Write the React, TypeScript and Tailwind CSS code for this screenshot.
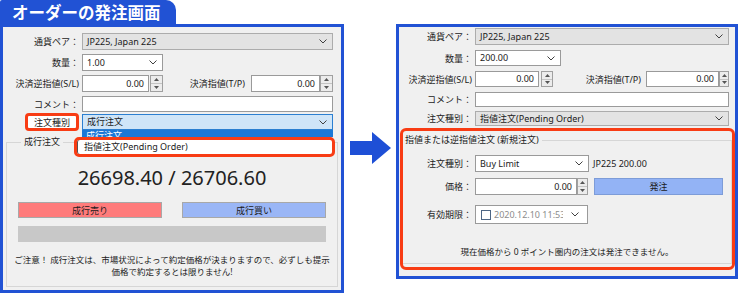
import React from "react";

function Chevron() {
  return (
    <svg width="8" height="5" viewBox="0 0 8 5" className="shrink-0">
      <path d="M0.5 0.5L4 4L7.5 0.5" fill="none" stroke="#404040" strokeWidth="1" />
    </svg>
  );
}

function Combo({ text, className, variant }: { text: string; className: string; variant: "gray" | "white" | "open" }) {
  const look =
    variant === "gray"
      ? "bg-[#e3e3e3] border-[#acacac]"
      : variant === "open"
      ? "bg-[#cfe5f8] border-[#2b7fd1]"
      : "bg-white border-[#9a9a9a]";
  return (
    <div className={`flex items-center justify-between border pl-[4px] pr-[5px] ${look} ${className}`}>
      <span className="whitespace-nowrap leading-[12px]">{text}</span>
      <Chevron />
    </div>
  );
}

function Spinner({ className }: { className: string }) {
  return (
    <div className={`flex flex-col border border-[#a0a0a0] bg-[#ececec] ${className}`}>
      <div className="flex-1 flex items-center justify-center border-b border-[#c4c4c4]">
        <svg width="5" height="3" viewBox="0 0 5 3">
          <path d="M0 3L2.5 0L5 3Z" fill="#555" />
        </svg>
      </div>
      <div className="flex-1 flex items-center justify-center">
        <svg width="5" height="3" viewBox="0 0 5 3">
          <path d="M0 0L2.5 3L5 0Z" fill="#555" />
        </svg>
      </div>
    </div>
  );
}

function NumBox({ className }: { className: string }) {
  return (
    <div className={`flex items-center justify-end pr-[4px] bg-white border border-[#9a9a9a] ${className}`}>
      <span className="leading-[12px]">0.00</span>
    </div>
  );
}

export default function App() {
  return (
    <div className="w-[740px] h-[295px] bg-white flex overflow-hidden text-[9px] leading-none text-[#1b1b1b] font-['Noto_Sans','Noto_Sans_CJK_JP',sans-serif]">
      {/* Left column */}
      <div className="flex flex-col w-[344px] h-[293px] shrink-0">
        <div className="h-[24px] w-[176px] bg-[#2152d4] rounded-tr-[10px] rounded-tl-[2px] flex items-center pl-[12px] text-white font-bold text-[16.5px] leading-none font-['Noto_Sans_CJK_JP',sans-serif]">
          オーダーの発注画面
        </div>
        <div className="flex-1 border-[3px] border-[#2152d4] bg-[#f0f0f0] flex flex-col pt-[6px]">
          <div className="flex flex-col pr-[8px]">
            <div className="flex items-center h-[17px]">
              <div className="w-[79px] pr-[3px] text-right whitespace-nowrap">通貨ペア：</div>
              <Combo className="flex-1 h-full" variant="gray" text="JP225, Japan 225" />
            </div>
            <div className="flex items-center h-[17px] mt-[4px]">
              <div className="w-[79px] pr-[3px] text-right whitespace-nowrap">数量：</div>
              <Combo className="w-[81px] h-full" variant="white" text="1.00" />
            </div>
            <div className="flex items-center h-[17px] mt-[4px]">
              <div className="w-[79px] pr-[3px] text-right whitespace-nowrap">決済逆指値(S/L)</div>
              <NumBox className="w-[67px] h-full" />
              <Spinner className="w-[13px] h-full ml-[1px]" />
              <div className="flex-1 pr-[6px] text-right whitespace-nowrap">決済指値(T/P)</div>
              <NumBox className="w-[69px] h-full" />
              <Spinner className="w-[13px] h-full" />
            </div>
            <div className="flex items-center h-[16px] mt-[4px]">
              <div className="w-[79px] pr-[3px] text-right whitespace-nowrap">コメント：</div>
              <div className="flex-1 h-full bg-white border border-[#9a9a9a]" />
            </div>
            <div className="flex items-center h-[18px] mt-[1px]">
              <div className="w-[22px]" />
              <div className="w-[54px] h-full border-[3px] border-[#f83c14] rounded-[4px] bg-white flex items-center justify-center whitespace-nowrap">
                注文種別
              </div>
              <div className="relative flex-1 h-[16px] ml-[3px]">
                <Combo className="w-full h-full" variant="open" text="成行注文" />
                <div className="absolute top-full left-0 right-0 h-[7px] bg-[#1c78d6] overflow-hidden pl-[4px] pt-[1px] text-white z-10">
                  成行注文
                </div>
                <div className="absolute top-[23px] left-[-8px] right-[-2px] h-[20px] border-[3px] border-[#f83c14] rounded-[5px] bg-white flex items-center pl-[7px] z-20 shadow-[inset_1px_0_0_#555]">
                  <span className="whitespace-nowrap leading-[12px]">指値注文(Pending Order)</span>
                </div>
              </div>
            </div>
          </div>
          <fieldset className="mt-[5px] mx-[3px] mb-[3px] flex-1 border border-[#d6d6d6] flex flex-col items-center px-[11px] min-w-0">
            <legend className="ml-[3px] px-[3px] whitespace-nowrap leading-[12px]">成行注文</legend>
            <div className="mt-[18px] text-[20px] leading-[24px] font-['Noto_Sans',sans-serif] text-[#222]">
              26698.40 / 26706.60
            </div>
            <div className="w-full flex justify-between mt-[12px]">
              <div className="w-[144px] h-[16px] bg-[#ff7b7b] border border-[#a8a8a8] flex items-center justify-center">
                成行売り
              </div>
              <div className="w-[144px] h-[16px] bg-[#9ab6f6] border border-[#a8a8a8] flex items-center justify-center">
                成行買い
              </div>
            </div>
            <div className="w-full h-[16px] mt-[8px] bg-[#c8c8c8]" />
            <div className="mt-[12px] text-center text-[8.5px] leading-[12px] whitespace-nowrap">
              ご注意！ 成行注文は、市場状況によって約定価格が決まりますので、必ずしも提示
              <br />
              価格で約定するとは限りません!
            </div>
          </fieldset>
        </div>
      </div>

      {/* Arrow */}
      <div className="w-[52px] shrink-0 flex items-center pl-[6px]">
        <svg width="41" height="32" viewBox="0 0 41 32">
          <polygon points="0,9 22,9 22,0 41,16 22,32 22,23 0,23" fill="#1e4fd6" />
        </svg>
      </div>

      {/* Right column */}
      <div className="pt-[24px] w-[342px] shrink-0">
        <div className="h-[255px] border-[3px] border-[#2152d4] bg-[#f0f0f0] flex flex-col pt-[1px] pb-[6px]">
          <div className="flex flex-col pr-[6px]">
            <div className="flex items-center h-[17px]">
              <div className="w-[76px] pr-[3px] text-right whitespace-nowrap">通貨ペア：</div>
              <Combo className="flex-1 h-full" variant="gray" text="JP225, Japan 225" />
            </div>
            <div className="flex items-center h-[16px] mt-[5px]">
              <div className="w-[76px] pr-[3px] text-right whitespace-nowrap">数量：</div>
              <Combo className="w-[86px] h-full" variant="white" text="200.00" />
            </div>
            <div className="flex items-center h-[16px] mt-[5px]">
              <div className="w-[76px] pr-[3px] text-right whitespace-nowrap">決済逆指値(S/L)</div>
              <NumBox className="w-[64px] h-full" />
              <Spinner className="w-[12px] h-full ml-[2px]" />
              <div className="flex-1 pr-[5px] text-right whitespace-nowrap">決済指値(T/P)</div>
              <NumBox className="w-[73px] h-full" />
              <Spinner className="w-[10px] h-full" />
            </div>
            <div className="flex items-center h-[15px] mt-[5px]">
              <div className="w-[76px] pr-[3px] text-right whitespace-nowrap">コメント：</div>
              <div className="flex-1 h-full bg-white border border-[#9a9a9a]" />
            </div>
            <div className="flex items-center h-[15px] mt-[4px]">
              <div className="w-[76px] pr-[3px] text-right whitespace-nowrap">注文種別：</div>
              <Combo className="flex-1 h-full" variant="gray" text="指値注文(Pending Order)" />
            </div>
          </div>
          <div className="mt-[2px] ml-[1px] flex-1 border-[3px] border-[#f83c14] rounded-[6px] flex flex-col">
            <fieldset className="mt-[3px] mb-[3px] flex-1 border-t border-r border-b border-[#d6d6d6] flex flex-col min-w-0">
              <legend className="pl-[2px] pr-[3px] whitespace-nowrap leading-[12px]">指値または逆指値注文 (新規注文)</legend>
              <div className="flex items-center h-[17px] mt-[9px]">
                <div className="w-[72px] pr-[3px] text-right whitespace-nowrap">注文種別：</div>
                <Combo className="w-[114px] h-full" variant="white" text="Buy Limit" />
                <div className="ml-[4px] whitespace-nowrap">JP225 200.00</div>
              </div>
              <div className="flex items-center h-[17px] mt-[6px]">
                <div className="w-[72px] pr-[3px] text-right whitespace-nowrap">価格：</div>
                <NumBox className="w-[102px] h-full" />
                <Spinner className="w-[11px] h-full" />
                <div className="ml-[6px] w-[129px] h-full bg-[#93b3f5] border border-[#7d9cd8] flex items-center justify-center">
                  発注
                </div>
              </div>
              <div className="flex items-center h-[19px] mt-[10px]">
                <div className="w-[72px] pr-[3px] text-right whitespace-nowrap">有効期限：</div>
                <div className="w-[113px] h-full bg-white border border-[#9a9a9a] flex items-center">
                  <div className="ml-[5px] w-[10px] h-[10px] border border-[#4d6685] bg-white shrink-0" />
                  <span className="ml-[3px] w-[69px] overflow-hidden whitespace-nowrap leading-[12px] text-[#8c8c8c]">2020.12.10 11:53</span>
                  <div className="ml-auto mr-[8px] flex">
                    <Chevron />
                  </div>
                </div>
              </div>
              <div className="mt-[22px] text-center text-[8.5px] leading-[12px] whitespace-nowrap">
                現在価格から 0 ポイント圏内の注文は発注できません。
              </div>
            </fieldset>
          </div>
        </div>
      </div>
    </div>
  );
}
